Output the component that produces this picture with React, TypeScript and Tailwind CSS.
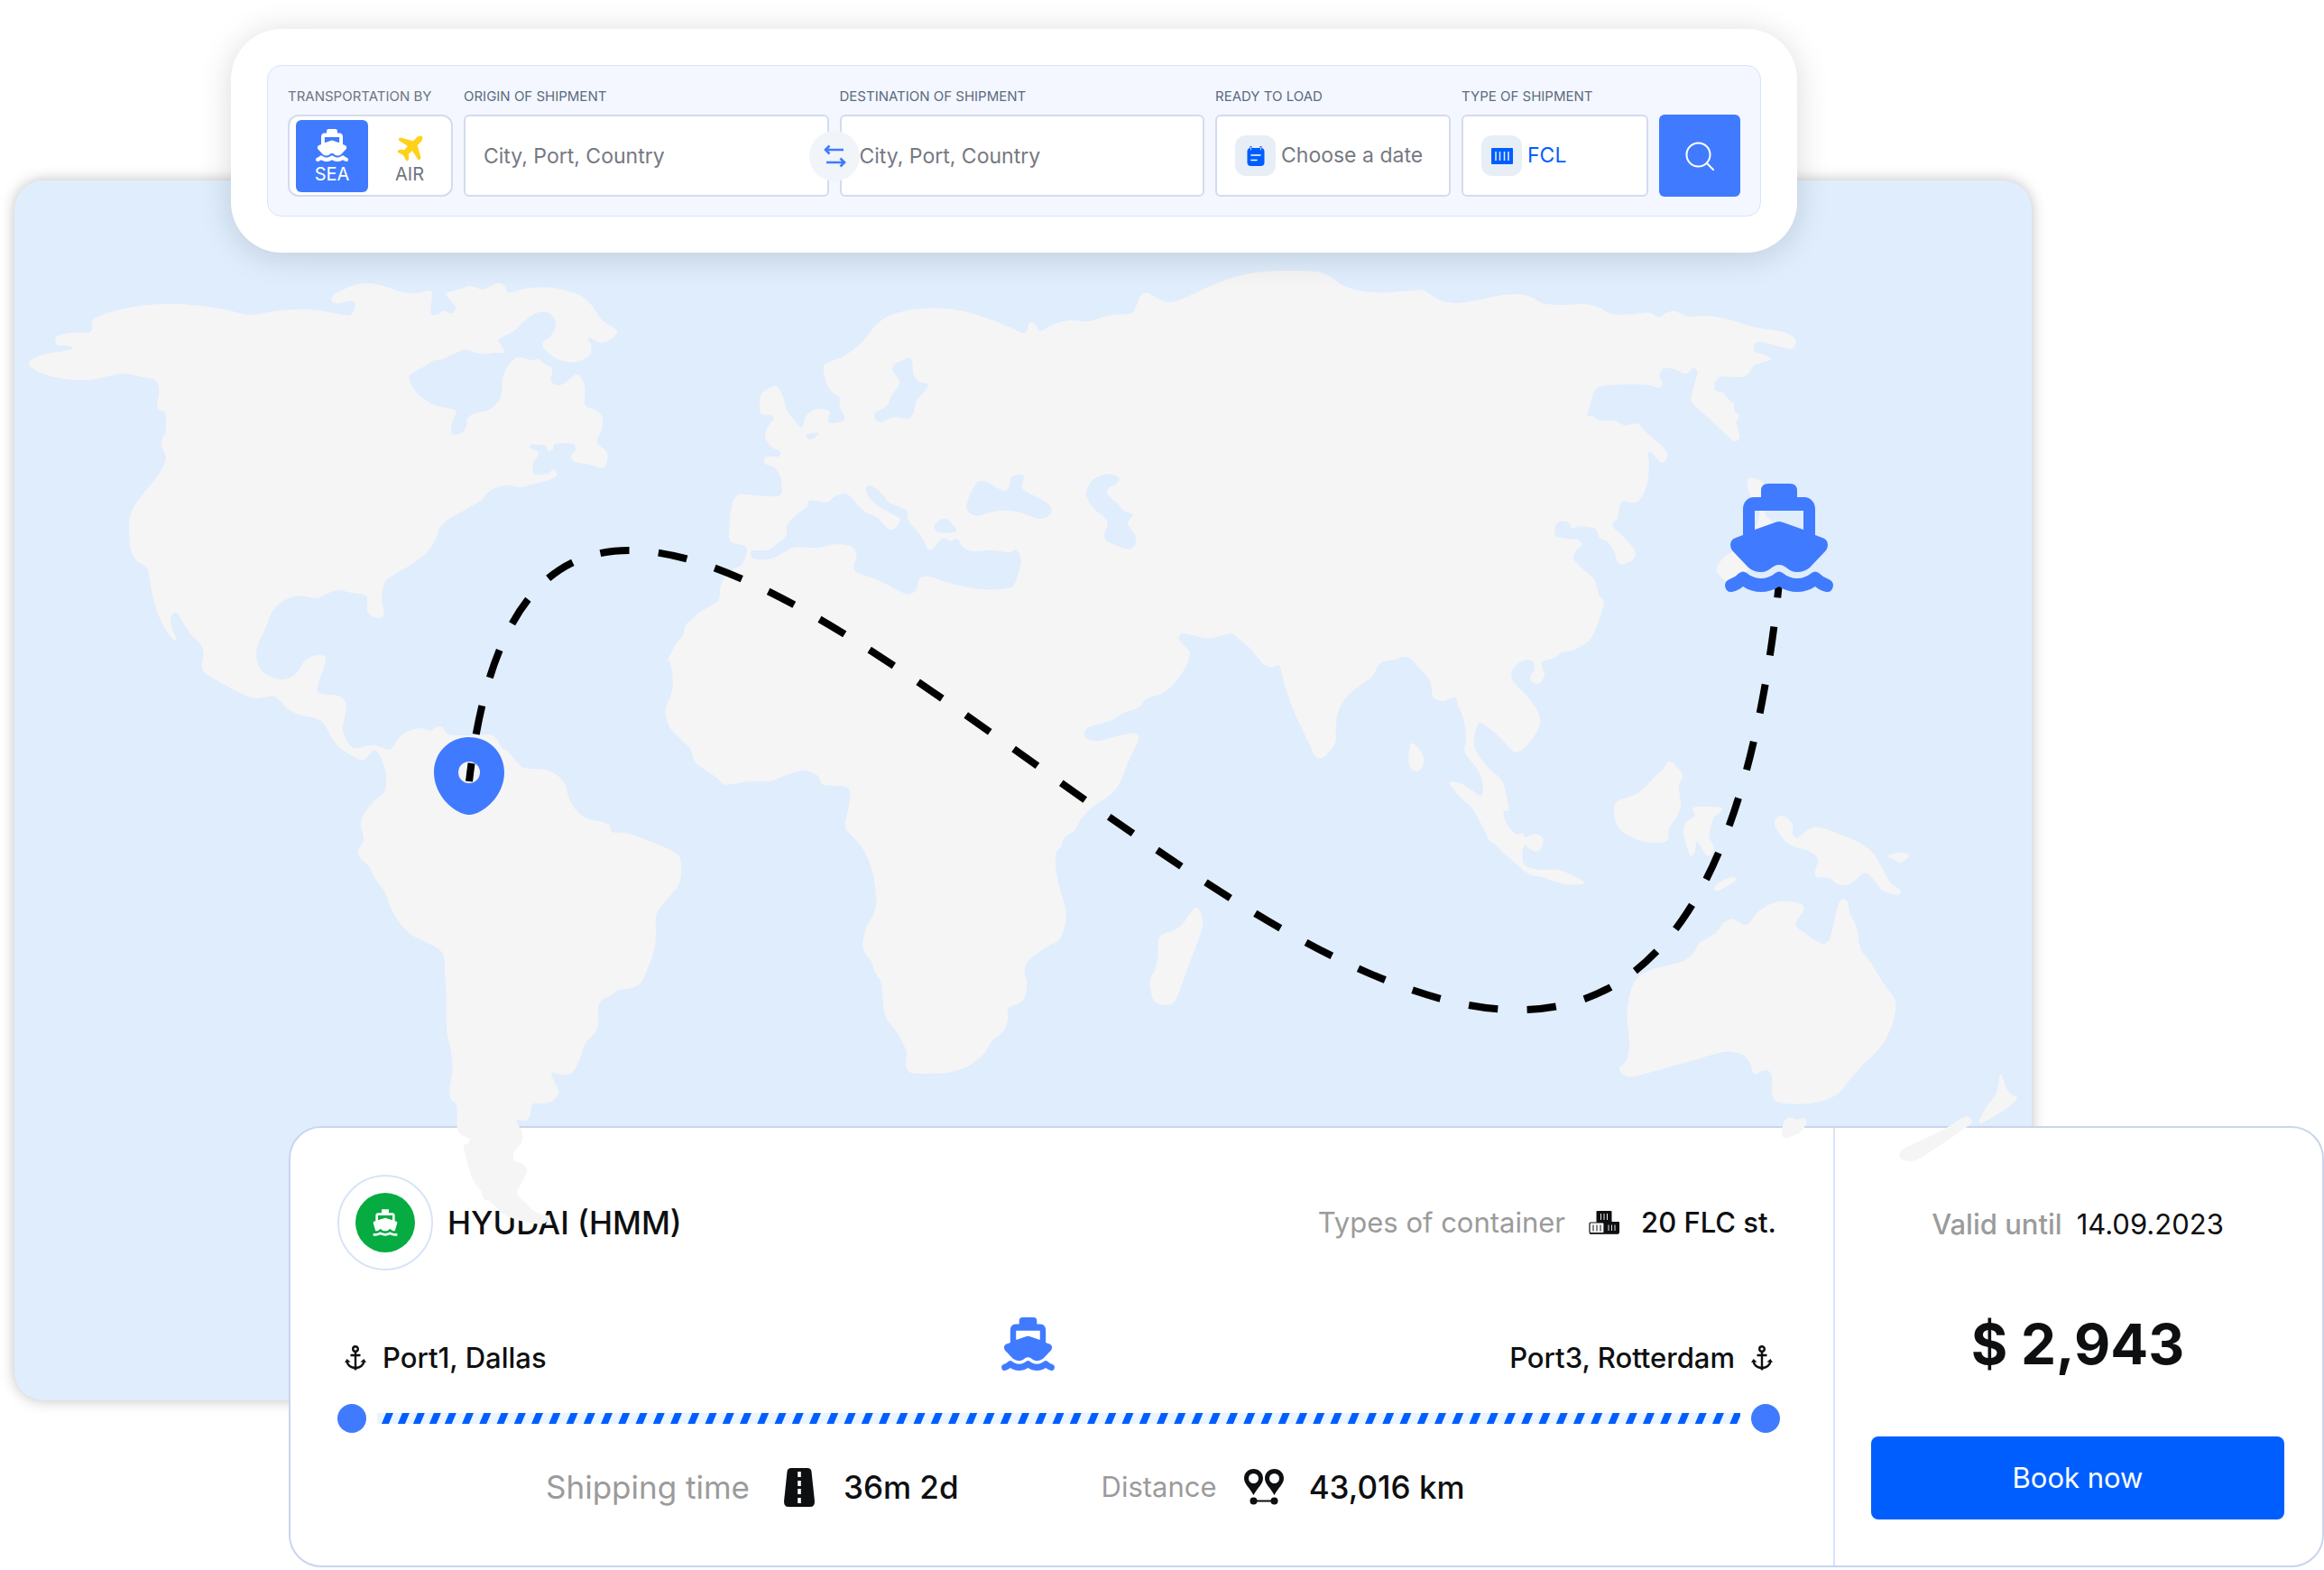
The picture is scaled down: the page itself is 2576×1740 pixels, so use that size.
import { ReactNode, useState } from "react";

type Tile = { x: number; y: number; kx: number; ky: number };

/* Chart tiles: the coastlines are digitised tile by tile and joined into one outline. */
const nw: Tile = { x: 0, y: 280, kx: 0.54847, ky: 0.40816 };
const nc: Tile = { x: 700, y: 280, kx: 0.54847, ky: 0.40816 };
const ne: Tile = { x: 1450, y: 280, kx: 0.54847, ky: 0.40816 };
const sw: Tile = { x: 300, y: 780, kx: 0.54847, ky: 0.40816 };
const sc: Tile = { x: 1100, y: 780, kx: 0.33333, ky: 0.33333 };
const se: Tile = { x: 1550, y: 780, kx: 0.48469, ky: 0.34439 };

type Piece = [Tile, string];
type Point = [number, number];

function toPoints(pieces: Piece[]): Point[] {
  return pieces.flatMap(([tile, text]) =>
    text
      .trim()
      .split(/\s+/)
      .map((pair): Point => {
        const [x, y] = pair.split(",").map(Number);
        return [tile.x + x * tile.kx, tile.y + y * tile.ky];
      }),
  );
}

/* Closed smooth curve through every point. */
function outline(pieces: Piece[]): string {
  const p = toPoints(pieces);
  const n = p.length;
  const f = (v: number) => v.toFixed(1);
  let d = `M${f(p[0][0])} ${f(p[0][1])}`;
  for (let i = 0; i < n; i++) {
    const a = p[(i - 1 + n) % n];
    const b = p[i];
    const c = p[(i + 1) % n];
    const e = p[(i + 2) % n];
    const len = Math.hypot(c[0] - b[0], c[1] - b[1]);
    const handle = (from: Point, to: Point): Point => {
      const l = Math.hypot(to[0] - from[0], to[1] - from[1]) || 1;
      const k = Math.min(1 / 6, (len * 0.36) / l);
      return [(to[0] - from[0]) * k, (to[1] - from[1]) * k];
    };
    const h1 = handle(a, c);
    const h2 = handle(b, e);
    d += `C${f(b[0] + h1[0])} ${f(b[1] + h1[1])} ${f(c[0] - h2[0])} ${f(c[1] - h2[1])} ${f(c[0])} ${f(c[1])}`;
  }
  return d + "Z";
}

const land: Piece[][] = [
  // The Americas
  [
    [nw, "58,302 70,286 95,274 130,267 147,260 138,253 118,252 112,242 116,226 150,217 178,217 186,208 188,181 235,157 290,143 350,139 410,145 460,156 505,169 550,160 600,154 650,158 705,170 717,150 716,134 705,132 680,138 670,130 674,115 700,96 722,86 745,83 775,90 810,106 840,110 866,103 873,108 871,165 885,167 898,158 913,165 921,150 912,132 901,112 915,104 932,98 948,90 965,96 977,100 990,92 1005,83 1020,88 1028,108 1060,98 1100,94 1140,101 1175,118 1195,142 1218,184 1245,208 1246,220 1230,239 1215,244 1200,237 1188,231 1195,255 1192,278 1175,293 1155,298 1130,291 1110,275 1097,255 1098,241 1112,228 1123,200 1120,178 1107,163 1092,161 1075,170 1055,192 1035,216 1008,235 1015,255 1019,271 1000,272 970,275 940,264 915,276 895,289 877,293 862,306 845,318 828,335 832,360 850,390 880,415 921,428 915,455 911,485 920,495 932,489 942,474 945,450 960,436 990,425 1008,402 1014,375 1016,340 1025,310 1036,293 1045,284 1058,286 1075,292 1088,289 1100,302 1115,312 1116,325 1113,345 1122,359 1137,357 1152,342 1166,330 1177,345 1182,370 1183,414 1205,428 1218,448 1217,475 1207,515 1225,538 1228,555 1220,584 1190,575 1160,567 1154,553 1163,535 1158,519 1122,519 1117,535 1108,538 1102,524 1085,522 1075,520 1071,530 1087,540 1087,552 1079,566 1077,596 1085,602 1107,600 1119,588 1125,605 1105,620 1075,629 1055,637 1020,632 990,647 975,670 945,695 905,725 888,750 880,780 862,815 825,852 785,885 775,905 772,940 776,985 765,992 750,986 742,970 740,933 715,925 683,916 665,924 640,938 600,932 570,948 550,975 535,1025 520,1070 520,1110 535,1143 570,1159 597,1145 615,1110 635,1094 656,1096 657,1115 645,1165 641,1190 655,1199 685,1204 700,1225 697,1260 693,1295 703,1330 718,1345 755,1337"],
    [sw, "240,124 255,100 272,78 300,66 323,73 335,62 348,65 360,83 400,86 445,84 462,105 467,120 481,131 498,158 512,174 555,179 580,195 597,225 600,245 615,285 640,312 672,321 685,330 690,348 720,351 760,370 822,408 830,450 825,490 808,520 780,570 779,620 775,670 763,715 748,758 730,771 702,778 690,790 670,804 662,825 662,870 655,895 636,922 625,965 610,1000 590,1008 568,1002 575,1030 582,1055 570,1078 550,1086 529,1087 524,1120 515,1132 497,1133 509,1165 507,1190 492,1218 492,1240 510,1250 518,1268 508,1300 498,1328 515,1355 530,1375 548,1387 562,1391 555,1410 535,1412 500,1402 470,1385 445,1353 430,1343 426,1325 410,1295 398,1250 390,1200 400,1193 401,1180 385,1170 377,1150 376,1092 363,1070 362,1045 367,990 364,940 357,900 355,850 355,800 352,730 345,673 285,628 262,597 245,560 230,510 218,488 205,460 200,443 182,420 177,400 188,367 182,330 188,300 205,270 230,238 233,195 228,165 218,135 208,126 198,140 188,154"],
    [nw, "725,1376 690,1348 672,1320 655,1280 637,1264 605,1255 580,1238 565,1215 550,1204 520,1210 500,1205 470,1185 415,1143 408,1125 411,1085 403,1060 385,1035 370,1005 357,977 346,988 347,1015 357,1054 340,1035 322,990 310,940 303,890 297,856 275,835 264,805 261,765 262,720 275,680 300,637 322,600 334,565 334,548 326,525 328,505 335,485 334,435 318,422 321,385 320,360 312,345 285,337 250,328 220,335 190,344 150,346 110,338 75,322"],
  ],
  // Europe, Asia and Africa
  [
    [nc, "388,310 398,298 430,280 460,250 480,220 495,195 520,172 560,156 610,151 660,156 710,174 770,205 790,218 799,213 802,195 810,189 818,197 827,213 850,196 885,184 925,186 965,170 1010,165 1020,145 1028,118 1043,109 1060,122 1085,134 1110,127 1150,103 1210,70 1260,54 1320,49 1380,51 1405,60 1440,90 1475,104 1520,108"],
    [ne, "185,105 232,102 245,112 270,130 300,137 340,129 380,118 420,113 450,120 475,138 510,142 560,140 590,150 612,166 650,167 690,163 708,175 725,163 740,158 768,173 800,171 850,181 900,202 955,213 980,228 986,245 978,261 955,256 920,243 903,246 903,268 920,276 934,290 902,306 890,328 875,338 833,337 822,355 823,374 838,380 852,402 860,410 862,430 871,442 865,460 868,475 872,500 865,512 855,508 820,462 785,420 774,398 780,360 787,325 779,313 762,329 740,316 718,315 710,335 716,355 710,366 690,360 650,358 590,363 577,380 571,410 565,441 577,444 588,455 620,457 640,469 665,464 680,484 705,513 722,535 726,555 715,571 705,560 692,541 687,545 689,575 686,620 678,655 662,679 635,676 628,700 625,722 615,740 632,765 650,790 662,815 655,835 633,847 624,837 618,810 605,785 588,773 580,750 550,743 533,748 526,733 510,730 500,742 500,768 518,776 545,779 553,795 540,812 537,832 552,855 575,882 583,905 588,930 598,950 592,980 582,1020 567,1055 535,1080 512,1085 498,1100 475,1110 473,1125 478,1145 470,1167 458,1170 449,1155 457,1130 455,1112 443,1105 425,1115 411,1140 415,1165 440,1200 462,1240 469,1275 458,1310 435,1347 420,1357 408,1347 390,1320 365,1290 348,1277 340,1290 335,1335 345,1365 365,1400 390,1430 400,1470 405,1515"],
    [se, "240,347 248,385 265,415 278,420 284,416 290,430 310,419 328,428 331,448 325,468 313,475 300,466 288,456 284,490 290,520 320,534 365,534 395,550 427,576 400,583 365,575 330,558 298,548 270,515 235,473 220,450 208,440 195,402 170,340 140,298 117,254 140,255 165,275 190,295 192,250 180,210 152,155 155,115 150,55"],
    [ne, "311,1255 303,1230 297,1208 275,1217 262,1216 252,1205 247,1165 238,1148 222,1125 207,1103 195,1097 175,1105 150,1112 140,1125 130,1150 105,1175 75,1210 60,1250 56,1290 55,1330 40,1360 25,1374"],
    [nc, "1380,1365 1372,1340 1340,1250 1320,1175 1309,1122 1292,1126 1275,1115 1250,1075 1232,1055 1220,1040 1208,1035 1165,1047 1115,1034 1106,1045 1112,1060 1128,1085 1122,1120 1100,1165 1075,1195 1040,1212 1025,1235 995,1250 970,1270 925,1288 915,1305 922,1322 945,1325 980,1313 1018,1304 1025,1320 1005,1380 985,1445 965,1475 930,1507"],
    [sc, "289,392 275,420 240,445 228,475 213,495 210,530 215,570 226,620 240,665 245,710 238,750 220,787 185,806 155,825 120,855 107,885 115,930 110,970 90,995 53,1012 52,1050 35,1090"],
    [sw, "1458,915 1445,945 1425,970 1400,990 1365,1002 1297,1003 1284,985 1285,945 1273,910 1262,885 1243,850 1237,800 1233,755 1222,730 1213,697 1200,675 1197,645 1205,605 1220,565 1224,525 1215,450 1195,390 1165,345 1161,325 1168,280 1171,240 1160,225 1117,220 1105,195 1080,181 1050,190 1010,210 970,211 918,220 905,205 890,190 858,158 848,122 830,98 805,60"],
    [nc, "69,1240 82,1190 83,1150 78,1115 74,1103 85,1075 88,1065 103,1040 110,1010 125,993 133,980 165,955 177,940 180,905 190,880 205,860 222,848 233,815 230,797 215,791 202,787 197,770 199,720 205,675 215,657 235,657 298,660 303,625 298,600 287,582 270,573 268,560 278,553 297,554 300,540 282,527 270,500 275,475 287,450 282,441 262,437 259,410 262,385 275,370 293,363 306,390 312,420 325,448 344,475 352,445 365,429 380,424 401,432 398,461 427,458 430,445 420,415 422,396 405,378 393,350"],
  ],
  // Japan
  [[ne, "889,614 920,628 922,705 940,735 950,790 900,850 850,892 830,875 826,855 840,828 870,800 900,760 912,700 893,660"]],
  // Sri Lanka
  [[se, "30,127 50,150 58,175 55,205 42,218 28,205 23,175"]],
  // Borneo
  [[se, "619,186 635,200 650,232 641,265 646,320 638,360 620,400 616,438 600,447 560,443 520,420 500,390 493,350 500,315 550,285 585,237 607,207"]],
  // Sulawesi
  [[se, "673,335 700,331 740,335 735,350 722,365 715,395 711,430 722,465 712,490 700,480 683,443 678,480 668,490 655,440 652,405 660,378 678,360"]],
  // Timor
  [[se, "722,595 732,577 755,560 771,560 768,573 745,592 730,602"]],
  // New Guinea
  [[se, "875,360 888,367 902,390 902,420 912,432 930,412 950,398 970,399 1000,415 1050,443 1085,480 1105,525 1125,575 1148,600 1144,615 1110,603 1090,572 1075,548 1060,547 1042,572 1020,584 1000,577 988,562 957,558 953,540 959,500 940,475 895,453 870,415 860,385 865,368"]],
  // New Britain
  [[se, "1120,490 1142,479 1160,480 1168,491 1150,511 1135,503"]],
  // Australia
  [[se, "1018,627 1028,640 1033,675 1048,720 1058,790 1080,832 1105,890 1135,950 1137,980 1130,1030 1105,1100 1060,1165 1035,1205 1005,1255 960,1282 910,1288 870,1283 855,1262 854,1200 845,1180 830,1182 814,1192 805,1160 790,1132 760,1120 730,1125 635,1163 535,1201 515,1193 505,1173 520,1150 528,1100 523,1010 528,940 545,885 580,855 650,828 675,800 690,768 725,738 745,703 765,693 797,711 820,672 855,642 890,635 922,645 927,665 909,710 935,743 970,772 985,760 995,710 1007,640"]],
  // Tasmania
  [[se, "882,1345 893,1331 910,1337 930,1334 932,1350 920,1378 890,1397 877,1390 878,1365"]],
  // New Zealand
  [[se, "1377,1191 1390,1235 1400,1254 1415,1267 1408,1283 1375,1317 1330,1350 1340,1308 1368,1250"]],
  [[se, "1298,1327 1312,1345 1300,1362 1240,1420 1185,1468 1160,1471 1147,1458 1150,1437 1190,1408 1245,1372"]],
  // Madagascar
  [[sc, "672,678 690,688 700,738 655,865 612,980 595,998 570,1002 545,995 530,970 524,922 540,885 550,840 553,780 570,765 610,750 640,722"]],
];

const seas: Piece[][] = [
  // Mediterranean
  [[nc, "243,810 275,808 290,795 305,780 313,765 315,740 330,715 355,690 360,673 395,678 410,663 430,654 443,663 460,690 475,706 495,718 510,738 522,752 533,748 543,724 525,708 500,690 485,672 474,648 480,632 495,642 510,660 520,678 555,700 560,728 580,760 592,785 597,802 605,808 615,795 630,775 645,783 658,777 670,800 690,811 725,808 765,814 778,808 787,835 782,870 772,905 760,911 720,915 670,906 625,889 600,879 582,885 575,915 562,927 545,922 500,890 455,868 449,850 455,825 445,798 410,792 380,801 330,800 305,816 280,832 245,829"]],
  // Aegean
  [[nc, "612,742 625,725 640,725 650,740 655,758 620,759"]],
  // Black Sea
  [[nc, "677,690 685,655 697,626 710,620 725,628 752,647 763,635 768,610 783,603 794,610 789,638 810,658 840,680 849,697 843,715 825,723 805,715 780,703 750,700 725,705 702,714 683,707"]],
  // Caspian Sea
  [[nc, "919,650 930,620 950,605 970,602 985,612 980,628 965,638 961,655 985,685 995,702 1013,711 1002,735 1015,760 1020,780 1015,798 1005,805 985,798 960,782 956,765 962,735 955,718 935,695 922,670"]],
  // Baltic Sea
  [[nc, "560,286 567,298 570,330 580,350 599,358 590,380 575,405 570,435 558,451 530,447 503,460 492,450 492,435 515,418 525,390 542,353 528,320 532,303"]],
  // North Sea inlet
  [[nc, "354,494 378,489 370,502 358,506"]],
];

function ShipShape() {
  return (
    <>
      <path
        fillRule="evenodd"
        d="M48 0H72Q80 0 80 8V15H88C95 15 100 21 100 28V57L108 60Q114 62 114 68Q114 71 112 74L94 93Q88 98 80 98C70 98 68 90 60 90C52 90 50 98 40 98Q32 98 26 93L8 74Q6 71 6 68Q6 62 12 60L20 57V28C20 21 25 15 32 15H40V8Q40 0 48 0ZM33 30V51L57 42.5Q60 41.5 63 42.5L87 51V30Z"
      />
      <path d="M16 99Q20 96 24 99C34 107 46 107 56 99Q60 96 64 99C74 107 86 107 96 99Q100 96 104 99Q109 104 115 106Q120 108 120 113Q119 121 112 120Q105 118.500 100 114C88 122 72 122 60 114C48 122 32 122 20 114Q15 118.500 8 120Q1 121 0 113Q0 108 5 106Q11 104 16 99Z" />
    </>
  );
}

function ShipIcon({ className }: { className: string }) {
  return (
    <svg viewBox="0 0 120 120" fill="currentColor" aria-hidden="true" className={className}>
      <ShipShape />
    </svg>
  );
}

function PlaneIcon() {
  return (
    <svg viewBox="0 0 87 87" aria-hidden="true" className="size-[29px]" fill="#ffd117">
      <path d="M84 3Q78 0 68 5L54 19L14 8Q10 7 6 11Q3 15 8 18L36 36L24 49L11 47Q7 47 3 51Q0 55 4 57L18 64Q22 67 23 69L30 83Q32 87 36 84Q40 80 40 76L38 63L51 51L69 79Q72 84 76 81Q80 77 79 73L68 33L82 19Q87 9 84 3Z" />
    </svg>
  );
}

function SwapIcon() {
  return (
    <svg viewBox="0 0 26 26" aria-hidden="true" className="size-[26px]" fill="none" stroke="#407bff" strokeWidth="2.600">
      <path d="M23 6H3M7.500 1.500L3 6l4.500 4.500" />
      <path d="M4 20h20M19.500 15.500L24 20l-4.500 4.500" />
    </svg>
  );
}

function CalendarIcon() {
  return (
    <svg viewBox="0 0 20 22" aria-hidden="true" className="h-[22px] w-5">
      <path d="M4.500 0v4M15.500 0v4" stroke="#005eff" strokeWidth="2" strokeLinecap="round" />
      <rect x="0.500" y="2" width="19" height="20" rx="4" fill="#005eff" />
      <path d="M4.500 1v3.500M15.500 1v3.500" stroke="#e8eef6" strokeWidth="0.800" />
      <path d="M5 10h10M5 15.500h6" stroke="#fff" strokeWidth="1.600" strokeLinecap="round" />
    </svg>
  );
}

function ContainerIcon() {
  return (
    <svg viewBox="0 0 24 18" aria-hidden="true" className="h-[18px] w-6">
      <rect width="24" height="18" rx="1" fill="#005eff" />
      <path d="M5 4v10M9.500 4v10M14.500 4v10M19 4v10" stroke="#e8eef6" strokeWidth="1.500" />
    </svg>
  );
}

function SearchIcon() {
  return (
    <svg viewBox="0 0 32 32" aria-hidden="true" className="size-8" fill="none" stroke="#fff" strokeWidth="2" strokeLinecap="round">
      <circle cx="14.500" cy="14.500" r="13" />
      <path d="M24 24l7 7" />
    </svg>
  );
}

function AnchorIcon() {
  return (
    <svg viewBox="0 0 24 28" aria-hidden="true" className="h-7 w-6" fill="none" stroke="#0e0f11" strokeWidth="2.400">
      <circle cx="12" cy="4" r="2.800" />
      <path d="M12 7v19M6.500 11h11" />
      <path d="M2.500 17.500C3 22 7 25 12 25s9-3 9.500-7.500" />
      <path d="M0 19l2.600-4 4 3.600zM24 19l-2.600-4-4 3.600z" fill="#0e0f11" stroke="none" />
      <path d="M9 25l3 3 3-3z" fill="#0e0f11" stroke="none" />
    </svg>
  );
}

function BoatBadgeIcon() {
  return (
    <svg viewBox="0 0 24 24" aria-hidden="true" className="size-8" fill="#fff">
      <path d="M20 21c-1.390 0-2.780-.47-4-1.320-2.440 1.710-5.560 1.710-8 0C6.780 20.530 5.390 21 4 21H2v2h2c1.380 0 2.740-.35 4-.99 2.520 1.290 5.480 1.290 8 0 1.260.65 2.620.99 4 .99h2v-2h-2zM3.950 19H4c1.600 0 3.020-.88 4-2 .98 1.120 2.400 2 4 2s3.020-.88 4-2c.98 1.120 2.400 2 4 2h.05l1.890-6.680c.08-.26.06-.54-.06-.78s-.34-.42-.6-.5L20 10.620V6c0-1.100-.9-2-2-2h-3V1H9v3H6c-1.100 0-2 .9-2 2v4.620l-1.290.42c-.26.08-.48.26-.6.5s-.15.52-.06.78L3.950 19zM6 6h12v3.970L12 8 6 9.970V6z" />
    </svg>
  );
}

function CratesIcon() {
  return (
    <svg viewBox="0 0 34 26" aria-hidden="true" className="h-[26px] w-[34px]">
      <rect x="8.500" y="0" width="17" height="13" rx="1" fill="#0e0f11" />
      <rect x="17" y="12" width="17" height="13" rx="1" fill="#0e0f11" />
      <rect x="1" y="13" width="16" height="11.500" rx="1" fill="#fff" stroke="#0e0f11" strokeWidth="1.200" />
      <path d="M1 25h32" stroke="#0e0f11" strokeWidth="1.600" />
      <path d="M13.500 3v7M17 3v7M20.500 3v7M22 15.500v6.500M25.500 15.500v6.500M29 15.500v6.500" stroke="#fff" strokeWidth="0.900" />
      <path d="M5 15.500v7M9 15.500v7M13 15.500v7" stroke="#0e0f11" strokeWidth="1" />
    </svg>
  );
}

function RoadIcon() {
  return (
    <svg viewBox="0 0 34 43" aria-hidden="true" className="h-[43px] w-[34px]">
      <path d="M8 0H26Q30 0 30.500 4L34 37Q34 43 29 43H5Q0 43 0 37L3.500 4Q4 0 8 0Z" fill="#0e0f11" />
      <path d="M17 4v6M17 14v6M17 23v6M17 33v6" stroke="#fff" strokeWidth="3.600" />
    </svg>
  );
}

function DistanceIcon() {
  return (
    <svg viewBox="0 0 44 40" aria-hidden="true" className="h-10 w-11" fill="#0e0f11">
      <path fillRule="evenodd" d="M10.500 0C16.500 0 21 4.500 21 10.500C21 17 14.500 21 10.500 29C6.500 21 0 17 0 10.500C0 4.500 4.500 0 10.500 0ZM10.500 5A5.500 5.500 0 1 0 10.500 16A5.500 5.500 0 1 0 10.500 5Z" />
      <path fillRule="evenodd" d="M33.500 0C39.500 0 44 4.500 44 10.500C44 17 37.500 21 33.500 29C29.500 21 23 17 23 10.500C23 4.500 27.500 0 33.500 0ZM33.500 5A5.500 5.500 0 1 0 33.500 16A5.500 5.500 0 1 0 33.500 5Z" />
      <circle cx="10.500" cy="35.500" r="4" />
      <circle cx="33.500" cy="35.500" r="4" />
      <path d="M10.500 35.500h23" stroke="#0e0f11" strokeWidth="2" />
    </svg>
  );
}

function WorldMap() {
  return (
    <svg
      viewBox="16 200 2236 1352"
      role="img"
      aria-label="World map with the sea route"
      className="pointer-events-none relative z-10 block w-full overflow-visible"
    >
      <g fill="#f5f5f5">
        {land.map((shape, i) => (
          <path key={i} d={outline(shape)} />
        ))}
      </g>
      <g fill="#dfedfd">
        {seas.map((shape, i) => (
          <path key={i} d={outline(shape)} />
        ))}
      </g>
      <path
        d="M1973 636C1838 2010 630 -82 520 866"
        fill="none"
        stroke="#000"
        strokeWidth="8"
        strokeDasharray="32.4 32.35"
        strokeDashoffset="6"
      />
      <path
        fill="#407bff"
        fillRule="evenodd"
        d="M520 817C542 817 559 834 559 856C559 878 542 897 526 902Q520 904 514 902C498 897 481 878 481 856C481 834 498 817 520 817ZM520 844A12 12 0 1 0 520 868A12 12 0 1 0 520 844Z"
      />
      <g transform="translate(1912 536)" fill="#407bff">
        <ShipShape />
      </g>
    </svg>
  );
}

function Field({ label, id, className, children }: { label: string; id: string; className: string; children: ReactNode }) {
  return (
    <div className={`flex flex-col gap-[10px] ${className}`}>
      <label htmlFor={id} className="text-[15px] leading-5 whitespace-nowrap text-[#5b6b80] uppercase">
        {label}
      </label>
      {children}
    </div>
  );
}

const box = "h-[91px] rounded-md border-2 border-[#d3dbf0] bg-white";

function SearchBar() {
  const [mode, setMode] = useState("sea");
  const [origin, setOrigin] = useState("");
  const [destination, setDestination] = useState("");
  const swap = () => {
    setOrigin(destination);
    setDestination(origin);
  };
  return (
    <section className="relative z-20 mr-[584px] ml-64 rounded-[56px] bg-white p-10 shadow-[0_4px_36px_rgba(0,0,0,0.15)]">
      <form
        className="flex items-end gap-3 rounded-2xl border border-[#d6e4fa] bg-[#f4f7ff] px-[22px] pt-6 pb-[21px]"
        onSubmit={(e) => e.preventDefault()}
      >
        <div className="flex w-[183px] flex-col gap-[10px]">
          <span id="mode" className="text-[15px] leading-5 whitespace-nowrap text-[#6f7480]">
            TRANSPORTATION BY
          </span>
          <div role="group" aria-labelledby="mode" className="flex h-[91px] items-center rounded-xl border-2 border-[#d3dbf0] bg-white pl-[7px]">
            <button
              type="button"
              aria-pressed={mode === "sea"}
              onClick={() => setMode("sea")}
              className="flex h-20 w-20 flex-col items-center gap-0.5 rounded-md bg-[#407bff] pt-[10px] text-xl leading-6 text-white"
            >
              <ShipIcon className="size-9" />
              SEA
            </button>
            <button
              type="button"
              aria-pressed={mode === "air"}
              onClick={() => setMode("air")}
              className="flex h-20 flex-1 flex-col items-center gap-0.5 pt-[10px] text-xl leading-6 text-[#6f7480]"
            >
              <span className="flex size-9 items-end justify-center">
                <PlaneIcon />
              </span>
              AIR
            </button>
          </div>
        </div>

        <Field label="Origin of shipment" id="origin" className="relative flex-1">
          <input
            id="origin"
            value={origin}
            onChange={(e) => setOrigin(e.target.value)}
            placeholder="City, Port, Country"
            className={`w-full px-5 text-[23px] placeholder:text-[#757982] ${box}`}
          />
          <button
            type="button"
            onClick={swap}
            aria-label="Swap origin and destination"
            className="absolute -right-[34px] bottom-[17px] z-10 flex size-14 items-center justify-center rounded-full bg-[#f1f5f9]"
          >
            <SwapIcon />
          </button>
        </Field>

        <Field label="Destination of shipment" id="destination" className="flex-1">
          <input
            id="destination"
            value={destination}
            onChange={(e) => setDestination(e.target.value)}
            placeholder="City, Port, Country"
            className={`w-full px-5 text-[23px] placeholder:text-[#757982] ${box}`}
          />
        </Field>

        <Field label="Ready to load" id="date" className="w-[261px]">
          <div className={`flex items-center gap-[6px] pl-5 ${box}`}>
            <span className="flex size-[45px] shrink-0 items-center justify-center rounded-xl bg-[#e8eef6]">
              <CalendarIcon />
            </span>
            <input id="date" placeholder="Choose a date" className="w-full min-w-0 text-[23px] placeholder:text-[#757982]" />
          </div>
        </Field>

        <Field label="Type of shipment" id="type" className="w-[207px]">
          <div className={`flex items-center gap-[6px] pl-5 ${box}`}>
            <span className="flex size-[45px] shrink-0 items-center justify-center rounded-xl bg-[#e8eef6]">
              <ContainerIcon />
            </span>
            <select id="type" className="w-full appearance-none bg-transparent text-[23px] text-[#005eff]">
              <option>FCL</option>
            </select>
          </div>
        </Field>

        <button type="submit" aria-label="Search" className="flex h-[91px] w-[90px] items-center justify-center rounded-md bg-[#407bff]">
          <SearchIcon />
        </button>
      </form>
    </section>
  );
}

/* The first stripes sit closer together than the rest. */
const stripes = [5, 23, 40, 58, ...Array.from({ length: 75 }, (_, i) => 75 + i * 19.3)];

function RouteBar() {
  return (
    <div className="mt-[33px] flex items-center justify-between gap-3">
      <span className="size-8 shrink-0 rounded-full bg-[#407bff]" />
      <svg viewBox="0 0 1515 12" preserveAspectRatio="none" aria-hidden="true" className="h-3 w-full min-w-0 flex-1 bg-[#ebf5ff]">
        {stripes.map((x) => (
          <path key={x} d={`M${x} 12L${x + 5} 0H${x + 13}L${x + 8} 12Z`} fill="#005eff" />
        ))}
      </svg>
      <span className="size-8 shrink-0 rounded-full bg-[#407bff]" />
    </div>
  );
}

function QuoteCard() {
  return (
    <section className="relative z-0 -mt-[304px] ml-80 flex rounded-[36px] border-2 border-[#c9d5ee] bg-white text-[#0e0f11]">
      <div className="min-w-0 flex-1 pt-[52px] pr-[59px] pb-[63px] pl-[52px]">
        <div className="flex items-center justify-between">
          <div className="flex items-center gap-4">
            <span className="flex size-[106px] items-center justify-center rounded-full border-2 border-[#d8e4f7]">
              <span className="flex size-[66px] items-center justify-center rounded-full bg-[#06ab42]">
                <BoatBadgeIcon />
              </span>
            </span>
            <h2 className="text-[35px] font-medium">HYUDAI (HMM)</h2>
          </div>
          <div className="mr-1 flex items-center text-[31px]">
            <span className="text-[#9b9b9b]">Types of container</span>
            <span className="mr-6 ml-[26px]">
              <CratesIcon />
            </span>
            <span className="font-medium">20 FLC st.</span>
          </div>
        </div>

        <div className="mt-[52px] flex h-[63px] items-end justify-between pr-2 pl-2 text-[31px] leading-9 font-medium">
          <span className="flex items-center gap-[18px]">
            <AnchorIcon />
            Port1, Dallas
          </span>
          <ShipIcon className="size-[59px] self-start text-[#407bff]" />
          <span className="flex items-center gap-[18px]">
            Port3, Rotterdam
            <AnchorIcon />
          </span>
        </div>

        <RouteBar />

        <div className="mt-9 flex h-12 items-center gap-[158px] pl-[231px]">
          <div className="flex items-center text-[35px]">
            <span className="text-[#9b9b9b]">Shipping time</span>
            <span className="mr-8 ml-[38px]">
              <RoadIcon />
            </span>
            <span className="font-medium">36m 2d</span>
          </div>
          <div className="flex items-center">
            <span className="text-[31px] text-[#9b9b9b]">Distance</span>
            <span className="mr-7 ml-[30px]">
              <DistanceIcon />
            </span>
            <span className="text-[35px] font-medium">43,016 km</span>
          </div>
        </div>
      </div>

      <div className="flex w-[542px] shrink-0 flex-col border-l-2 border-[#d6e4fa] pt-[87px] pr-[42px] pl-10 text-center">
        <p className="flex justify-center gap-4 text-[31px] leading-10">
          <span className="font-medium text-[#9b9b9b]">Valid until</span>
          <span>14.09.2023</span>
        </p>
        <p className="mt-[77px] text-[62px] leading-[72px] font-bold">$ 2,943</p>
        <button type="button" className="mt-[66px] h-[92px] rounded-lg bg-[#005eff] text-[31px] text-white">
          Book now
        </button>
      </div>
    </section>
  );
}

export default function App() {
  return (
    <main className="flow-root overflow-hidden bg-white pt-8 pb-[3px] font-['Inter',sans-serif]">
      <SearchBar />
      <div className="-mt-20 mr-[324px] ml-4 rounded-[32px] bg-[#dfedfd] shadow-[0_0_16px_rgba(0,0,0,0.25)]">
        <WorldMap />
      </div>
      <QuoteCard />
    </main>
  );
}
